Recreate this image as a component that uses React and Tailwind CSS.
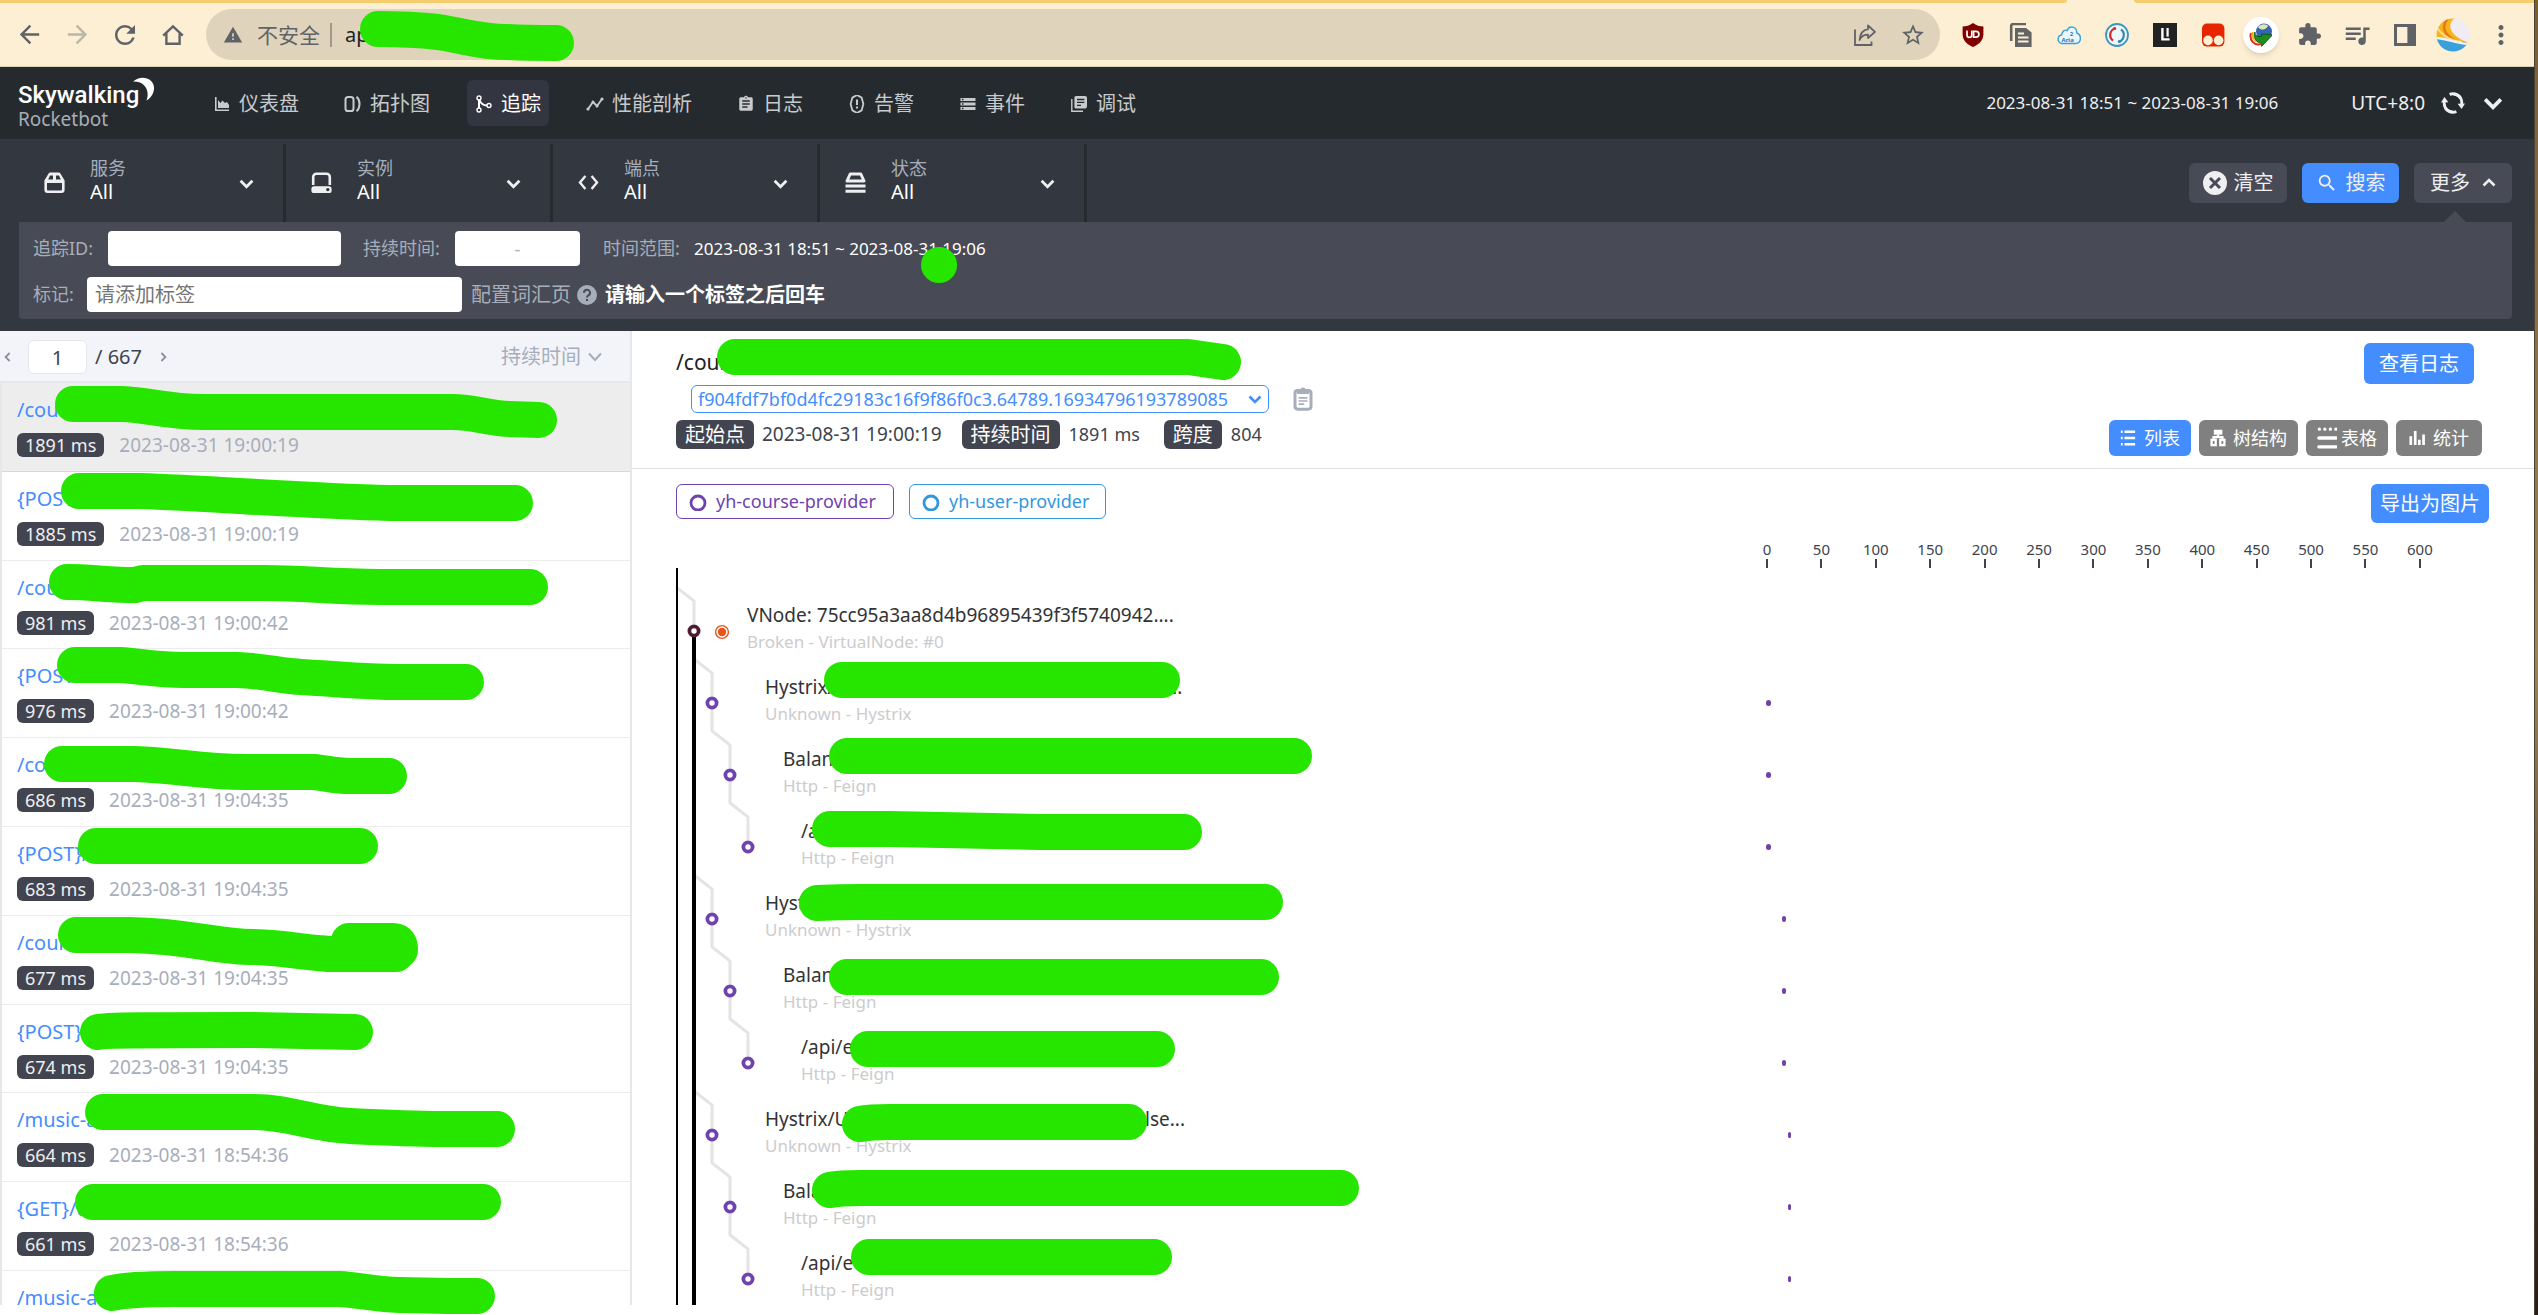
import React from 'react';
import {
  MdArrowBack,
  MdArrowForward,
  MdRefresh,
  MdWarning,
  MdStarBorder,
  MdExtension,
  MdQueueMusic,
  MdMoreVert,
  MdAssignment,
  MdStorage,
  MdSearch,
} from 'react-icons/md';

/* ---------- data ---------- */

const navItems = [
  { label: '仪表盘', icon: 'dashboard' },
  { label: '拓扑图', icon: 'topology' },
  { label: '追踪', icon: 'trace', active: true },
  { label: '性能剖析', icon: 'profile' },
  { label: '日志', icon: 'log' },
  { label: '告警', icon: 'alarm' },
  { label: '事件', icon: 'event' },
  { label: '调试', icon: 'debug' },
];

const selectors = [
  { id: 'service', label: '服务', icon: 'package' },
  { id: 'instance', label: '实例', icon: 'disk' },
  { id: 'endpoint', label: '端点', icon: 'code' },
  { id: 'status', label: '状态', icon: 'stack' },
];

const traces = [
  { name: '/cours', ms: 1891, time: '2023-08-31 19:00:19', active: true },
  { name: '{POST', ms: 1885, time: '2023-08-31 19:00:19' },
  { name: '/cou', ms: 981, time: '2023-08-31 19:00:42' },
  { name: '{POST', ms: 976, time: '2023-08-31 19:00:42' },
  { name: '/cou', ms: 686, time: '2023-08-31 19:04:35' },
  { name: '{POST}/', ms: 683, time: '2023-08-31 19:04:35' },
  { name: '/cour', ms: 677, time: '2023-08-31 19:04:35' },
  { name: '{POST}/', ms: 674, time: '2023-08-31 19:04:35' },
  { name: '/music-a', ms: 664, time: '2023-08-31 18:54:36' },
  { name: '{GET}/c', ms: 661, time: '2023-08-31 18:54:36' },
  { name: '/music-a', ms: 0, time: '' },
];

const spans = [
  { depth: 0, name: 'VNode: 75cc95a3aa8d4b96895439f3f5740942....', layer: 'Broken - VirtualNode: #0' },
  { depth: 1, name: 'Hystrix/', tail: '...', nameWidth: 'w-[402px]', layer: 'Unknown - Hystrix', start: 19, width: 5 },
  { depth: 2, name: 'Balanc', layer: 'Http - Feign', start: 19, width: 5 },
  { depth: 3, name: '/ap', layer: 'Http - Feign', start: 19, width: 5 },
  { depth: 1, name: 'Hystr', layer: 'Unknown - Hystrix', start: 35, width: 4 },
  { depth: 2, name: 'Balanc', layer: 'Http - Feign', start: 35, width: 4 },
  { depth: 3, name: '/api/e', layer: 'Http - Feign', start: 35, width: 4 },
  { depth: 1, name: 'Hystrix/U', tail: 'lse...', nameWidth: 'w-[380px]', layer: 'Unknown - Hystrix', start: 41, width: 3 },
  { depth: 2, name: 'Bala', layer: 'Http - Feign', start: 41, width: 3 },
  { depth: 3, name: '/api/e', layer: 'Http - Feign', start: 41, width: 3 },
];

const ticks = [0, 50, 100, 150, 200, 250, 300, 350, 400, 450, 500, 550, 600];

const indent = ['pl-[115px]', 'pl-[133px]', 'pl-[151px]', 'pl-[169px]'];

// marker strokes that hide private parts of the page
const strokes = [
  'M378 29 C400 29 420 30 438 32 C465 36 480 42 507 42 C525 43 540 43 556 43',
  'M73 404 H122 C150 405 165 412 204 412 H453 C475 412 490 419 510 419 L539 420',
  'M79 491 H140 C210 493 300 501 390 503 H515',
  'M67 582 C90 582 110 585 135 585 L143 583 H265 C305 583 330 587 380 587 H530',
  'M75 665 H120 C140 666 155 670 184 670 H237 C265 671 280 676 302 677 C340 679 360 682 400 682 H466',
  'M62 764 H135 C175 765 200 772 245 772 H314 C325 773 335 776 350 776 H389',
  'M96 846 H360',
  'M76 935 H130 C190 936 215 947 253 947 C290 948 310 954 335 954 H396',
  'M349 941 H392 C400 941 400 946 400 950',
  'M98 1032 C105 1030 150 1030 253 1030 L355 1032',
  'M103 1112 H253 C290 1112 310 1124 350 1126 C390 1128 410 1129 441 1129 H497',
  'M93 1202 H483',
  'M112 1293 C125 1290 150 1289 175 1289 H339 C360 1290 370 1294 400 1295 L449 1296 H477',
  'M735 357 H1188 L1223 362',
  'M842 680 H1162',
  'M847 756 H1294',
  'M830 829 H890 L1040 832 H1184',
  'M817 903 C840 902 850 902 860 902 H1265',
  'M847 977 H1261',
  'M868 1049 H1157',
  'M860 1124 C870 1122 880 1122 890 1122 H1129',
  'M830 1190 C840 1188 850 1188 860 1188 H1341',
  'M869 1257 H1154',
  'M939 265 h0.1',
];

/* ---------- icons ---------- */

const Chevron = ({ className, up }) => (
  <svg viewBox="0 0 14 14" className={className} fill="none" stroke="currentColor" strokeWidth="2.6" aria-hidden="true">
    <path d={up ? 'M1.5 9.5 L7 4 L12.5 9.5' : 'M1.5 4.5 L7 10 L12.5 4.5'} />
  </svg>
);

const NavIcon = ({ name }) => {
  const cls = 'size-[18px] shrink-0';
  if (name === 'log') return <MdAssignment className={cls} />;
  if (name === 'event') return <MdStorage className={cls} />;
  const shapes = {
    dashboard: <path d="M2 2 h1.6 v12.4 H16 V16 H2z M5 13 V5 l2.5 3 2-2.5 2.5 2.5 2-1 2 3 v3z" fill="currentColor" />,
    topology: (
      <g fill="none" stroke="currentColor" strokeWidth="2">
        <rect x="1.5" y="2" width="8" height="14" rx="2.6" />
        <path d="M12.5 1.8 C16.5 5 16.5 13 12.5 16.2" />
      </g>
    ),
    trace: (
      <g fill="none" stroke="currentColor" strokeWidth="1.4">
        <circle cx="4" cy="3" r="2" />
        <circle cx="4" cy="15" r="2" />
        <circle cx="14" cy="10.5" r="2" />
        <path d="M4 5 V13 M4.5 5 C6 9 8 10.3 12 10.5" strokeWidth="2" />
      </g>
    ),
    profile: (
      <g>
        <path d="M2 14 L7 7 L11 11 L16 4" fill="none" stroke="currentColor" strokeWidth="1.8" />
        <g fill="currentColor">
          <circle cx="2" cy="14" r="1.6" />
          <circle cx="7" cy="7" r="1.5" />
          <circle cx="11" cy="11" r="1.5" />
          <circle cx="16" cy="4" r="1.6" />
        </g>
      </g>
    ),
    alarm: (
      <g fill="none" stroke="currentColor" strokeWidth="1.8">
        <path d="M9 0 L13.6 2.6 L15.4 9 L13.6 15.4 L9 18 L4.4 15.4 L2.6 9 L4.4 2.6z" strokeLinejoin="round" />
        <path d="M9 4.6 V10 M9 11.6 V13.6" strokeWidth="2" />
      </g>
    ),
    debug: (
      <g>
        <path d="M1.8 4 V16.2 H13" fill="none" stroke="currentColor" strokeWidth="1.4" />
        <path d="M6 1 H15 a2 2 0 0 1 2 2 V11 a2.6 2.6 0 0 1-2.6 2.6 H6 a1.6 1.6 0 0 1-1.6-1.6 V2.6 A1.6 1.6 0 0 1 6 1z" fill="currentColor" />
        <path d="M7 4.5 h7.4 M7 7.4 h7.4 M7 10.3 h4" stroke="#252a2f" strokeWidth="1.3" />
      </g>
    ),
  };
  return (
    <svg viewBox="0 0 18 18" className={cls} aria-hidden="true">
      {shapes[name]}
    </svg>
  );
};

const SelectorIcon = ({ name }) => {
  const shapes = {
    package: (
      <g>
        <path
          d="M6.4 .4 H14.6 a2 2 0 0 1 1.8 1.1 L20.6 8.4 V18 a3 3 0 0 1-3 3 H3.4 a3 3 0 0 1-3-3 V8.4 L4.6 1.5 A2 2 0 0 1 6.4 .4z M3 11 V17.4 a1 1 0 0 0 1 1 H17 a1 1 0 0 0 1-1 V11z M6 3.4 L4.2 7.4 H9 V3.4z M12 3.4 V7.4 H16.8 L15 3.4z"
          fill="currentColor"
          fillRule="evenodd"
        />
      </g>
    ),
    disk: (
      <g>
        <path d="M2.2 13 V5 a3.2 3.2 0 0 1 3.2-3.2 H15.6 a3.2 3.2 0 0 1 3.2 3.2 V13" fill="none" stroke="currentColor" strokeWidth="2.6" />
        <path d="M3 14.2 H18 a2.6 2.6 0 0 1 2.6 2.6 V18.4 a2.6 2.6 0 0 1-2.6 2.6 H3 A2.6 2.6 0 0 1 .4 18.4 V16.8 A2.6 2.6 0 0 1 3 14.2z" fill="currentColor" />
        <circle cx="16.8" cy="17.6" r="1.7" fill="#333840" />
      </g>
    ),
    code: <path d="M7.4 4 L2 10.5 L7.4 17 M13.6 4 L19 10.5 L13.6 17" fill="none" stroke="currentColor" strokeWidth="2.4" />,
    stack: (
      <g>
        <path d="M5.2 2 H15.8 L19 9 H2z" fill="none" stroke="currentColor" strokeWidth="3" strokeLinejoin="round" />
        <path d="M.5 14 H20.5 M.5 19.2 H20.5" stroke="currentColor" strokeWidth="3" />
      </g>
    ),
  };
  return (
    <svg viewBox="0 0 21 22" className="h-[22px] w-[21px] shrink-0" aria-hidden="true">
      {shapes[name]}
    </svg>
  );
};

const ClipboardIcon = () => (
  <svg viewBox="0 0 20 24" className="h-6 w-5" aria-hidden="true">
    <rect x="2" y="3.6" width="16" height="18.6" rx="2.6" fill="none" stroke="currentColor" strokeWidth="3" />
    <path d="M4 3 H7.4 a2.6 2.6 0 0 1 5.2 0 H16 V7 H4z" fill="currentColor" />
    <path d="M5.6 10.8 h8.8 M5.6 14 h8.8 M5.6 17.2 h5.6" stroke="currentColor" strokeWidth="1.7" />
  </svg>
);

const ViewIcon = ({ name }) => {
  const shapes = {
    list: <path d="M1 3 h2 M5 3 h12 M1 10 h2 M5 10 h12 M1 17 h2 M5 17 h12" stroke="currentColor" strokeWidth="2.8" />,
    tree: (
      <g fill="none" stroke="currentColor" strokeWidth="2.6">
        <rect x="5.6" y="2" width="7" height="3" fill="currentColor" />
        <path d="M9 6 V9 M4 12 V9 H14 V12" />
        <rect x="1.8" y="12" width="4.6" height="6" />
        <rect x="11.6" y="12" width="4.6" height="6" />
      </g>
    ),
    table: (
      <g stroke="currentColor" strokeLinecap="round" strokeWidth="3">
        <path d="M2 2 h.1 M7 2 h.1 M12 2 h.1 M17 2 h.1 M1.6 10 h15.6 M1.6 18 h15.6" />
      </g>
    ),
    stats: <path d="M2 18 V8 M7 18 V2 M11.6 18 V12 M16.4 18 V6" stroke="currentColor" strokeWidth="3" />,
  };
  return (
    <svg viewBox="0 0 18 20" className={name === 'table' ? 'h-[22px] w-5' : 'h-[18px] w-4'} aria-hidden="true">
      {shapes[name]}
    </svg>
  );
};

/* ---------- browser bar ---------- */

const ToolSlot = ({ label, children }) => (
  <button type="button" aria-label={label} className="flex h-12 w-12 shrink-0 items-center justify-center text-[#5f6368]">
    {children}
  </button>
);

const ExtensionIcons = () => (
  <div className="flex items-center">
    <ToolSlot label="uBlock">
      <svg viewBox="0 0 24 24" className="size-6">
        <path d="M12 0 C15 2.4 19 3.6 22.4 3.6 V11 C22.4 17.5 18 21.5 12 24 C6 21.5 1.6 17.5 1.6 11 V3.6 C5 3.6 9 2.4 12 0z" fill="#800000" />
        <path d="M6 7.5 V12 a2.4 2.4 0 0 0 4.8 0 V7.5" fill="none" stroke="#fff" strokeWidth="1.7" />
        <path d="M12.6 14.2 V8.4 H15 a2.9 2.9 0 0 1 0 5.8z" fill="none" stroke="#fff" strokeWidth="1.7" />
      </svg>
    </ToolSlot>
    <ToolSlot label="Copy">
      <svg viewBox="0 0 24 24" className="size-6">
        <path d="M2.2 18 V3 a2 2 0 0 1 2-2 H17" fill="none" stroke="#646464" strokeWidth="2.6" />
        <path d="M6 5 H17 L22.6 9.6 V24 H6z" fill="#646464" />
        <path d="M9 10.5 h6 M9 14.5 h10.5 M9 18.5 h10.5" stroke="#fcefd3" strokeWidth="1.8" />
      </svg>
    </ToolSlot>
    <ToolSlot label="Aria2">
      <svg viewBox="0 0 24 24" className="size-6">
        <path d="M4.5 20.5 C-.5 19 .5 12.5 4.6 12 C5 8 8 6.4 10.3 7.5 C12 2 20 3 19.8 10 C25 12 24.4 20 19 20.5z" fill="#e9f6fd" stroke="#3aa0de" strokeWidth="1.4" />
        <text x="4.5" y="18.6" fontSize="6" fontWeight="bold" fill="#2779b8">Aria</text>
        <text x="12.8" y="12.6" fontSize="6" fontWeight="bold" fill="#2779b8">2</text>
      </svg>
    </ToolSlot>
    <ToolSlot label="Sync">
      <svg viewBox="0 0 24 24" className="size-6" fill="none">
        <circle cx="12" cy="12" r="11" fill="#eef7fb" stroke="#3d96c0" strokeWidth="1.8" />
        <path d="M10.6 5.2 A7 7 0 0 0 8 17.6" stroke="#d02f2f" strokeWidth="2.2" />
        <path d="M13.4 18.8 A7 7 0 0 0 16 6.4" stroke="#2f86b8" strokeWidth="2.2" />
        <circle cx="9.6" cy="5.4" r="1.5" fill="#d02f2f" />
        <circle cx="14.4" cy="18.6" r="1.5" fill="#2f86b8" />
      </svg>
    </ToolSlot>
    <ToolSlot label="LI">
      <svg viewBox="0 0 24 24" className="size-6">
        <rect width="24" height="24" fill="#222" />
        <path d="M9.4 5 V16.4 H16.6" fill="none" stroke="#fff" strokeWidth="2.4" />
        <path d="M14.6 5 V13.6" stroke="#fff" strokeWidth="2.2" />
      </svg>
    </ToolSlot>
    <ToolSlot label="Tampermonkey">
      <svg viewBox="0 0 24 24" className="size-6">
        <rect x="1" y=".6" width="22.4" height="23" rx="5" fill="#e62600" />
        <circle cx="7" cy="17.4" r="4.8" fill="#fcefd3" />
        <circle cx="17.6" cy="17.4" r="4.8" fill="#fcefd3" />
      </svg>
    </ToolSlot>
    <ToolSlot label="Downloader">
      <span className="flex size-9 shrink-0 items-center justify-center rounded-full bg-white shadow-md">
        <svg viewBox="0 0 24 24" className="size-6">
          <circle cx="15" cy="8.6" r="8" fill="#3565b3" />
          <path d="M9 4 C12 0 18 1 19 3 C17 7 12 8 9 4z" fill="#dfe6b0" />
          <path d="M2 10 C0 17 5 23 12 21" fill="none" stroke="#e02a1b" strokeWidth="2" />
          <path d="M4 9 C2.6 15 6 20 12 19" fill="none" stroke="#f6b816" strokeWidth="2" />
          <path d="M6 9 C6 13 9 14 12.5 13.5 V11 L22.5 11.5 V13 L12.6 23.4 V19.8 C7 20 4 14 6 9z" fill="#1a8f1f" stroke="#0a4d10" strokeWidth=".8" />
        </svg>
      </span>
    </ToolSlot>
    <ToolSlot label="Extensions"><MdExtension className="size-[25px]" /></ToolSlot>
    <ToolSlot label="Media"><MdQueueMusic className="size-[30px] shrink-0" /></ToolSlot>
    <ToolSlot label="Side panel">
      <svg viewBox="0 0 22 22" className="size-[22px]">
        <path d="M0 0 H22 V22 H0z M3 3 V19 H13.4 V3z" fill="currentColor" fillRule="evenodd" />
      </svg>
    </ToolSlot>
    <ToolSlot label="Profile">
      <svg viewBox="0 0 34 34" className="size-[34px] shrink-0">
        <clipPath id="avatar"><circle cx="17" cy="17" r="16.5" /></clipPath>
        <g clipPath="url(#avatar)">
          <rect width="34" height="34" fill="#f1ebf3" />
          <path d="M0 0 H19 C11 5 12 17 31 24 L34 30 H0z" fill="#f8b416" />
          <path d="M12 0 C3 10 10 22 30 26" fill="none" stroke="#e8731a" strokeWidth="2.4" />
          <path d="M0 8 C6 18 14 22 26 24" fill="none" stroke="#fbe08a" strokeWidth="1.8" />
          <path d="M0 20 C10 21 22 26 34 26 V34 H0z" fill="#3a9fdc" />
          <path d="M0 20 C10 20 18 25 32 26" fill="none" stroke="#e6f4fb" strokeWidth="2.4" />
        </g>
      </svg>
    </ToolSlot>
    <ToolSlot label="Menu"><MdMoreVert className="size-[30px] shrink-0" /></ToolSlot>
  </div>
);

const BrowserBar = () => (
  <div className="shrink-0 bg-[#fcefd3]">
    <div className="flex h-[3px]">
      <div className="flex-1 rounded-br bg-[#f5cd6e]" />
      <div className="w-[67px]" />
      <div className="w-[400px] rounded-bl bg-[#f5cd6e]" />
    </div>
    <div className="flex h-16 items-center border-b border-[#d9d0b9] pr-[9px] pl-[5px]">
      <ToolSlot label="Back"><MdArrowBack className="size-[29px] shrink-0" /></ToolSlot>
      <ToolSlot label="Forward"><MdArrowForward className="size-[29px] shrink-0 opacity-40" /></ToolSlot>
      <ToolSlot label="Reload"><MdRefresh className="size-[30px] shrink-0" /></ToolSlot>
      <ToolSlot label="Home">
        <svg viewBox="0 0 22 22" className="size-[22px]" fill="none" stroke="currentColor" strokeWidth="2.4">
          <path d="M1.2 11.6 L11 2.4 L20.8 11.6 M4.4 9.6 V19.8 H17.6 V9.6" />
        </svg>
      </ToolSlot>
      <div className="ml-[9px] flex h-[51px] flex-1 items-center rounded-full bg-[#dfd3bb] pr-[3px] pl-[17px] text-[#5f6368]">
        <MdWarning className="size-5" />
        <span className="ml-[14px] text-[21px] leading-7">不安全</span>
        <span className="ml-[10px] h-6 w-0.5 bg-[#a09a8c]" />
        <span className="ml-[13px] text-[20px] leading-7 text-[#202124]">ap</span>
        <div className="ml-auto flex">
          <ToolSlot label="Share">
            <svg viewBox="0 0 24 24" className="size-6" fill="none" stroke="currentColor" strokeWidth="1.8">
              <path d="M2 6.5 V22 H18.5 V18.5" />
              <path d="M15 2.5 L22 8.8 L15 15 V11.6 C11 11.6 8 13.6 6.6 17 C7 11 10 7 15 6.2z" strokeLinejoin="round" />
            </svg>
          </ToolSlot>
          <ToolSlot label="Bookmark"><MdStarBorder className="size-[26px]" /></ToolSlot>
        </div>
      </div>
      <div className="ml-[9px]">
        <ExtensionIcons />
      </div>
    </div>
  </div>
);

/* ---------- app header ---------- */

const Header = () => (
  <header className="flex h-[72px] shrink-0 items-center bg-[#252a2f] text-[#efeff1]">
    <div className="w-[187px] pl-[18px]">
      <div className="flex h-7 items-start">
        <span className="font-[Roboto] text-[24px] leading-9 font-medium text-white">Skywalking</span>
        <svg viewBox="0 0 22 24" className="-ml-1.5 h-6 w-[22px] shrink-0" aria-hidden="true">
          <path d="M0 4.5 C8 -3 22 1 21 12 C20.6 17 17 22 13.4 23.6 C17 15 13 4 0 4.5z" fill="#fff" />
        </svg>
      </div>
      <div className="pt-1 text-[19px] leading-5 text-[#a9adb5]">Rocketbot</div>
    </div>
    <nav className="flex gap-[29px] pl-[18px]">
      {navItems.map((item) => (
        <a
          key={item.label}
          href="#"
          className={
            item.active
              ? 'flex h-[46px] items-center gap-2 rounded-md bg-[#333540] px-2 pt-0.5 text-[20px] whitespace-nowrap text-white'
              : 'flex h-[46px] items-center gap-2 rounded-md px-2 pt-0.5 text-[20px] whitespace-nowrap text-[#c9cacc]'
          }
        >
          <NavIcon name={item.icon} />
          {item.label}
        </a>
      ))}
    </nav>
    <div className="ml-auto flex items-center pr-[31px]">
      <span className="text-[17px] whitespace-nowrap">2023-08-31 18:51 ~ 2023-08-31 19:06</span>
      <span className="ml-[73px] text-[19px] whitespace-nowrap">UTC+8:0</span>
      <button type="button" aria-label="刷新" className="ml-4">
        <svg viewBox="0 0 24 24" className="size-6" fill="none" stroke="currentColor" strokeWidth="2.8">
          <path d="M8.6 3.4 A9 9 0 0 1 20.6 13.4 M15.4 20.6 A9 9 0 0 1 3.4 10.6" />
          <path d="M4.2 17 A9 9 0 0 0 11.4 21 M19.8 7 A9 9 0 0 0 12.6 3" />
          <path d="M0 11.6 L3.4 6 L7.4 11.2z M24 12.4 L20.6 18 L16.6 12.8z" fill="currentColor" stroke="none" />
        </svg>
      </button>
      <button type="button" aria-label="展开" className="ml-[18px]">
        <Chevron className="size-5" />
      </button>
    </div>
  </header>
);

/* ---------- search conditions ---------- */

const Conditions = () => (
  <section className="shrink-0 bg-[#333840] px-[19px] pt-[5px] pb-3 text-[#efeff1]">
    <div className="flex h-[78px] items-center">
      {selectors.map((s) => (
        <div key={s.id} className="flex h-full w-[267px] items-center border-r-[3px] border-[#252a2f] pr-[29px] pl-[25px]">
          <SelectorIcon name={s.icon} />
          <div className="ml-[25px] flex flex-1 flex-col pb-1.5">
            <label htmlFor={s.id} className="text-[18px] leading-6 text-[#a7aebb]">{s.label}</label>
            <select id={s.id} className="h-6 w-full appearance-none bg-transparent text-[20px] leading-6 text-white">
              <option>All</option>
            </select>
          </div>
          <Chevron className="size-[15px] shrink-0" />
        </div>
      ))}
      <div className="relative ml-auto flex gap-[15px] pr-[3px] text-[20px]">
        <button type="button" className="flex h-10 w-[98px] items-center justify-center gap-[7px] rounded-md bg-[#484b55]">
          <svg viewBox="0 0 24 24" className="size-6" aria-hidden="true">
            <circle cx="12" cy="12" r="12" fill="currentColor" />
            <path d="M7 7 L17 17 M17 7 L7 17" stroke="#484b55" strokeWidth="3" />
          </svg>
          清空
        </button>
        <button type="button" className="flex h-10 w-[97px] items-center justify-center gap-2 rounded-md bg-[#448dfe]">
          <MdSearch className="size-[22px]" />
          搜索
        </button>
        <button type="button" className="flex h-10 w-[98px] items-center justify-center gap-3 rounded-md bg-[#484b55]">
          更多
          <Chevron up className="size-3.5" />
        </button>
        <svg viewBox="0 0 24 12" className="absolute right-12 -bottom-5 h-3 w-6" aria-hidden="true">
          <path d="M12 0 L24 12 H0z" fill="#484b55" />
        </svg>
      </div>
    </div>

    <div className="mr-[3px] rounded-b bg-[#484b55] px-[14px] pt-[9px] pb-[7px] text-[18px] text-[#a7aebb]">
      <div className="flex h-[35px] items-center">
        <label htmlFor="trace-id" className="w-[75px]">追踪ID:</label>
        <input id="trace-id" className="h-[35px] w-[233px] rounded bg-white px-2 text-gray-700" />
        <label htmlFor="duration" className="ml-[22px] w-[92px]">持续时间:</label>
        <input id="duration" placeholder="-" className="h-[35px] w-[125px] rounded bg-white text-center text-gray-700 placeholder:text-[#a7aebb]" />
        <span className="ml-[23px] w-[91px]">时间范围:</span>
        <span className="text-[17px] text-white">2023-08-31 18:51 ~ 2023-08-31 19:06</span>
      </div>
      <div className="mt-[11px] flex h-[35px] items-center">
        <label htmlFor="tags" className="w-[54px]">标记:</label>
        <input id="tags" placeholder="请添加标签" className="h-[35px] w-[375px] rounded bg-white px-2 text-[20px] text-gray-700 placeholder:text-[#757575]" />
        <a href="#" className="ml-[9px] text-[20px]">配置词汇页</a>
        <svg viewBox="0 0 20 20" className="ml-[6px] size-5" aria-hidden="true">
          <circle cx="10" cy="10" r="10" fill="#a7aebb" />
          <path d="M7 7.8 a3 3 0 1 1 4.4 2.6 C10.3 11 10 11.4 10 12.6 M10 14 V16" fill="none" stroke="#484b55" strokeWidth="2" />
        </svg>
        <b className="ml-2 text-[20px] text-white">请输入一个标签之后回车</b>
      </div>
    </div>
  </section>
);

/* ---------- trace list ---------- */

const TraceList = () => (
  <aside className="flex w-[632px] shrink-0 flex-col border-r-2 border-[#e6e7ea]">
    <div className="flex h-[52px] shrink-0 items-center border-b-2 border-[#e6e8ee] bg-[#f3f4f9] pt-0.5 text-[20px] text-[#3d444f]">
      <button type="button" aria-label="上一页" className="ml-1 text-[#8b8f98]">
        <svg viewBox="0 0 7 10" className="h-2.5 w-[7px]" fill="none" stroke="currentColor" strokeWidth="1.8"><path d="M5.6 1 L1.6 5 L5.6 9" /></svg>
      </button>
      <input aria-label="页码" defaultValue="1" className="ml-[17px] h-[34px] w-[59px] rounded-md border border-[#e6e8ee] bg-white text-center" />
      <span className="ml-2">/ 667</span>
      <button type="button" aria-label="下一页" className="ml-[18px] text-[#8b8f98]">
        <svg viewBox="0 0 7 10" className="h-2.5 w-[7px]" fill="none" stroke="currentColor" strokeWidth="1.8"><path d="M1.4 1 L5.4 5 L1.4 9" /></svg>
      </button>
      <label className="relative mr-[28px] ml-auto text-[#a7aebb]">
        <select aria-label="排序" className="w-[101px] appearance-none bg-transparent">
          <option>持续时间</option>
        </select>
        <svg viewBox="0 0 14 14" className="pointer-events-none absolute top-2 right-0 size-3.5" fill="none" stroke="currentColor" strokeWidth="2"><path d="M1 3.5 L7 10 L13 3.5" /></svg>
      </label>
    </div>
    <ul className="grid min-h-0 flex-1 grid-rows-[repeat(10,minmax(0,1fr))_34px] border-l-2 border-[#e6e7ea]">
      {traces.map((t, i) => (
        <li
          key={i}
          className={
            t.active
              ? 'border-b border-[#d8d8d8] bg-[#ededed] pt-[13px] pl-[15px]'
              : 'border-b border-[#ececec] pt-[13px] pl-[15px] last:border-b-0'
          }
        >
          <a href="#" className="block text-[20px] leading-7 text-[#448dfe]">{t.name}</a>
          {t.ms > 0 && (
            <div className="mt-[9px] flex items-center">
              <span className="rounded-md bg-[#42454f] px-2 text-[18px] leading-6 text-[#efeff1]">{t.ms} ms</span>
              <span className="ml-[15px] text-[19px] leading-6 text-[#a7aebb]">{t.time}</span>
            </div>
          )}
        </li>
      ))}
    </ul>
  </aside>
);

/* ---------- trace detail ---------- */

const DetailHeader = () => (
  <div className="flex h-[138px] shrink-0 justify-between border-b border-[#dedfe2] pr-[52px] pl-11">
    <div>
      <h5 className="mt-[16px] text-[21px] leading-[30px] text-[#222]">/cour</h5>
      <div className="mt-2 ml-[15px] flex items-center gap-6">
        <div className="relative text-[#448dfe]">
          <select aria-label="追踪ID" className="h-7 w-[578px] appearance-none rounded-md border border-[#448dfe] bg-white px-1.5 text-[18px] leading-6">
            <option>f904fdf7bf0d4fc29183c16f9f86f0c3.64789.16934796193789085</option>
          </select>
          <Chevron className="pointer-events-none absolute top-[7px] right-[7px] size-3.5" />
        </div>
        <button type="button" aria-label="复制" className="-my-1 text-[#a7aebb]">
          <ClipboardIcon />
        </button>
      </div>
      <div className="mt-[7px] flex items-center text-[18px] text-[#3d444f]">
        <span className="rounded-md bg-[#42454f] px-[9px] text-[20px] leading-[29px] text-white">起始点</span>
        <span className="ml-2 text-[19px]">2023-08-31 19:00:19</span>
        <span className="ml-[20px] rounded-md bg-[#42454f] px-[9px] text-[20px] leading-[29px] text-white">持续时间</span>
        <span className="ml-[9px]">1891 ms</span>
        <span className="ml-6 rounded-md bg-[#42454f] px-[9px] text-[20px] leading-[29px] text-white">跨度</span>
        <span className="ml-[9px]">804</span>
      </div>
    </div>
    <div className="flex flex-col items-end">
      <button type="button" className="mt-3 mr-2 h-[41px] rounded-md bg-[#448dfe] px-[15px] text-[20px] text-white">查看日志</button>
      <div className="mt-9 flex gap-2 text-[18px] text-white">
        <button type="button" className="flex h-9 items-center gap-2 rounded-md bg-[#448dfe] px-[11px]"><ViewIcon name="list" />列表</button>
        <button type="button" className="flex h-9 items-center gap-[7px] rounded-md bg-[#808080] px-[11px]"><ViewIcon name="tree" />树结构</button>
        <button type="button" className="flex h-9 items-center gap-1 rounded-md bg-[#808080] px-[11px]"><ViewIcon name="table" />表格</button>
        <button type="button" className="flex h-9 items-center gap-2 rounded-md bg-[#808080] px-[13px]"><ViewIcon name="stats" />统计</button>
      </div>
    </div>
  </div>
);

const Legend = ({ name, className }) => (
  <span className={className}>
    <svg viewBox="0 0 18 18" className="size-[18px]" aria-hidden="true">
      <circle cx="9" cy="10" r="7" fill="none" stroke="currentColor" strokeWidth="2.8" />
    </svg>
    {name}
  </span>
);

// connector lines and node rings, 72px per row and 18px per level
const TreeLines = () => (
  <svg className="absolute inset-0 h-full w-full" aria-hidden="true">
    {spans.map((s, i) => {
      const x = 62 + s.depth * 18;
      const y = 63 + i * 72;
      const linkTop = s.depth > 1 ? y - 66 : y - 44;
      return (
        <path
          key={i}
          d={`M${x - 18} ${linkTop} V${y - 44} L${x} ${y - 30} V${y - 7}`}
          fill="none"
          stroke="#e4e4e4"
          strokeWidth="3"
        />
      );
    })}
    <path d="M45 0 V2000" stroke="#000" strokeWidth="2" />
    <path d="M62 69 V2000" stroke="#000" strokeWidth="4" />
    {spans.map((s, i) => (
      <circle
        key={i}
        cx={62 + s.depth * 18}
        cy={63 + i * 72}
        r="4.6"
        fill="#fff"
        stroke={s.depth === 0 ? '#4e1c31' : '#6f42ad'}
        strokeWidth="3.8"
      />
    ))}
    <circle cx="90" cy="64" r="6.4" fill="none" stroke="#e9541b" strokeWidth="1.4" />
    <circle cx="90" cy="64" r="4.2" fill="#e9541b" />
  </svg>
);

const TraceTree = () => (
  <div className="flex min-h-0 flex-1 flex-col">
    <div className="flex shrink-0 items-start pt-[15px] pr-[45px] pl-11">
      <Legend name="yh-course-provider" className="flex h-[35px] w-[218px] items-center gap-[9px] rounded-md border border-[#6f42ad] px-3 text-[18px] text-[#6f42ad]" />
      <Legend name="yh-user-provider" className="ml-[15px] flex h-[35px] w-[197px] items-center gap-[9px] rounded-md border border-[#3297dc] px-3 text-[18px] text-[#3297dc]" />
      <button type="button" className="ml-auto h-[39px] rounded-md bg-[#448dfe] px-[9px] text-[20px] text-white">导出为图片</button>
    </div>
    <ol className="mt-4 mr-[94px] flex w-[693px] shrink-0 justify-between self-end text-[#3d444f]">
      {ticks.map((t) => (
        <li key={t} className="flex w-10 flex-col items-center text-[15px] leading-5">
          {t}
          <span className="h-[9px] w-0.5 bg-[#3d444f]" />
        </li>
      ))}
    </ol>
    <div className="relative min-h-0 flex-1 overflow-hidden pt-[27px]">
      <TreeLines />
      <ul className="relative">
        {spans.map((s, i) => (
          <li key={i} className="grid h-[72px] grid-cols-[minmax(0,1fr)_787px] items-center">
            <div className={indent[s.depth] + ' pb-1'}>
              <p className="flex text-[19px] leading-[26px] whitespace-nowrap text-[#333]">
                <span className={s.nameWidth}>{s.name}</span>
                {s.tail}
              </p>
              <p className="text-[17px] leading-7 text-[#ccc]">{s.layer}</p>
            </div>
            {s.width && (
              <div className="h-1.5 rounded-full bg-[#6f42ad]" style={{ marginLeft: s.start, width: s.width }} />
            )}
          </li>
        ))}
      </ul>
    </div>
  </div>
);

/* ---------- marker overlay ---------- */

const Redaction = () => (
  <svg className="pointer-events-none absolute inset-0 h-full w-full" aria-hidden="true">
    <g fill="none" stroke="#26e600" strokeWidth="36" strokeLinecap="round" strokeLinejoin="round">
      {strokes.map((d, i) => (
        <path key={i} d={d} />
      ))}
    </g>
  </svg>
);

const App = () => {
  return (
    <div className="relative flex h-screen overflow-hidden bg-white font-['Noto_Sans','Noto_Sans_CJK_SC',sans-serif]">
      <div className="flex min-w-0 flex-1 flex-col">
        <BrowserBar />
        <Header />
        <Conditions />
        <main className="mb-[10px] flex min-h-0 flex-1">
          <TraceList />
          <div className="flex min-w-0 flex-1 flex-col">
            <DetailHeader />
            <TraceTree />
          </div>
        </main>
      </div>
      <div className="w-1 shrink-0 border-l border-[#4a4438] bg-linear-to-b from-[#7a5c32] via-[#a38350] to-[#2a1a18]" />
      <Redaction />
    </div>
  );
};

export default App;
